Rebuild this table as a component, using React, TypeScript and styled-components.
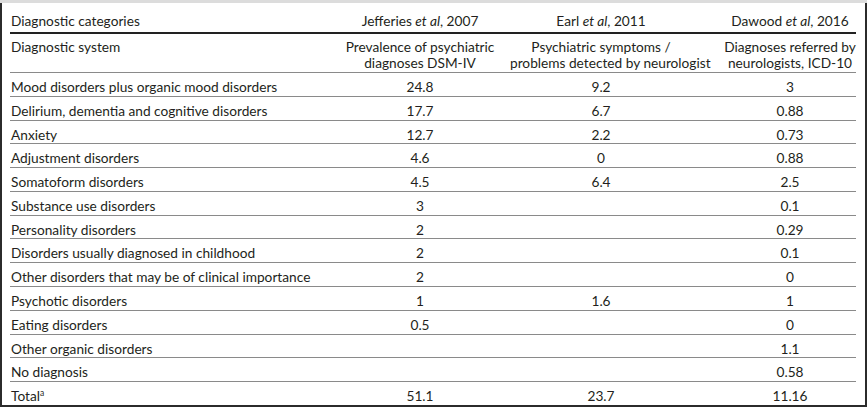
import React from 'react';
import styled, { createGlobalStyle } from 'styled-components';

const GlobalStyle = createGlobalStyle`
  html, body {
    margin: 0;
    padding: 0;
    background: #ffffff;
  }
  body {
    font-family: Lato, "Noto Sans", sans-serif;
    color: #231f20;
  }
`;

type Row = {
  label: string;
  sup?: string;
  values: string[];
};

const rows: Row[] = [
  { label: 'Mood disorders plus organic mood disorders', values: ['24.8', '9.2', '3'] },
  { label: 'Delirium, dementia and cognitive disorders', values: ['17.7', '6.7', '0.88'] },
  { label: 'Anxiety', values: ['12.7', '2.2', '0.73'] },
  { label: 'Adjustment disorders', values: ['4.6', '0', '0.88'] },
  { label: 'Somatoform disorders', values: ['4.5', '6.4', '2.5'] },
  { label: 'Substance use disorders', values: ['3', '', '0.1'] },
  { label: 'Personality disorders', values: ['2', '', '0.29'] },
  { label: 'Disorders usually diagnosed in childhood', values: ['2', '', '0.1'] },
  { label: 'Other disorders that may be of clinical importance', values: ['2', '', '0'] },
  { label: 'Psychotic disorders', values: ['1', '1.6', '1'] },
  { label: 'Eating disorders', values: ['0.5', '', '0'] },
  { label: 'Other organic disorders', values: ['', '', '1.1'] },
  { label: 'No diagnosis', values: ['', '', '0.58'] },
  { label: 'Total', sup: 'a', values: ['51.1', '23.7', '11.16'] },
];

const App: React.FC = () => {
  return (
    <>
      <GlobalStyle />
      <TopBand />
      <Frame>
        <Table>
          <colgroup>
            <col style={{ width: 320 }} />
            <col style={{ width: 180 }} />
            <col style={{ width: 182 }} />
            <col style={{ width: 164 }} />
          </colgroup>
          <thead>
            <StudyRow>
              <LabelCell>Diagnostic categories</LabelCell>
              <ValueCell>
                Jefferies <em>et al</em>, 2007
              </ValueCell>
              <ValueCell>
                Earl <em>et al</em>, 2011
              </ValueCell>
              <ValueCell $last>
                Dawood <em>et al</em>, 2016
              </ValueCell>
            </StudyRow>
            <SystemRow>
              <LabelCell>Diagnostic system</LabelCell>
              <ValueCell>
                Prevalence of psychiatric
                <br />
                diagnoses DSM-IV
              </ValueCell>
              <ValueCell>
                Psychiatric symptoms /
                <br />
                problems detected by neurologist
              </ValueCell>
              <ValueCell $last>
                Diagnoses referred by
                <br />
                neurologists, ICD-10
              </ValueCell>
            </SystemRow>
          </thead>
          <tbody>
            {rows.map((row, i) => (
              <DataRow key={row.label} $final={i === rows.length - 1}>
                <LabelCell>
                  {row.label}
                  {row.sup && <Sup>{row.sup}</Sup>}
                </LabelCell>
                {row.values.map((v, j) => (
                  <ValueCell key={j} $last={j === 2}>
                    {v}
                  </ValueCell>
                ))}
              </DataRow>
            ))}
          </tbody>
        </Table>
      </Frame>
    </>
  );
};

export default App;

// Styled Components

const TopBand = styled.div`
  height: 3px;
  background: #dcdcdc;
`;

const Frame = styled.div`
  width: 867px;
  height: 404px;
  box-sizing: border-box;
  border: 2px solid #2b2b2b;
  border-top: none;
  padding: 0 9px 0 8px;
`;

const Table = styled.table`
  width: 846px;
  height: 402px;
  table-layout: fixed;
  border-collapse: collapse;
  font-size: 13.7px;
  line-height: 15px;

  em {
    font-style: italic;
  }
`;

const LabelCell = styled.td`
  text-align: left;
  vertical-align: top;
  padding-left: 1px;
  white-space: nowrap;
`;

const ValueCell = styled.td<{ $last?: boolean }>`
  text-align: center;
  vertical-align: top;
  white-space: nowrap;
  padding-left: ${(p) => (p.$last ? '32px' : '0')};
  padding-right: 0;
`;

const StudyRow = styled.tr`
  height: 30px;
  border-bottom: 2px solid #222;

  td {
    padding-top: 10px;
    padding-bottom: 3px;
  }
`;

const SystemRow = styled.tr`
  height: 39px;
  border-bottom: 1px solid #8a8a8a;

  td {
    line-height: 16px;
    padding-top: 5px;
    padding-bottom: 1px;
  }
`;

const DataRow = styled.tr<{ $final?: boolean }>`
  border-bottom: ${(p) => (p.$final ? 'none' : '1px solid #8a8a8a')};

  td {
    line-height: 14px;
    padding-top: 7px;
    padding-bottom: 1px;
  }
`;

const Sup = styled.sup`
  font-size: 8.5px;
  line-height: 0;
  vertical-align: 5px;
`;
